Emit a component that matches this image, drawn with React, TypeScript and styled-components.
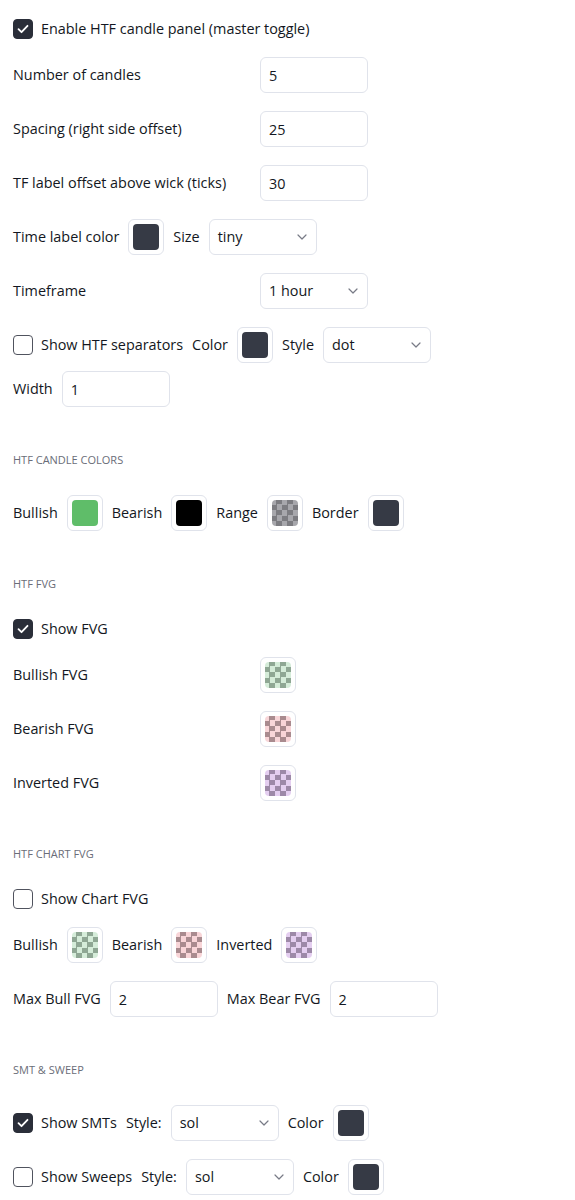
import React from "react";
import styled, { createGlobalStyle, css } from "styled-components";

const GlobalStyle = createGlobalStyle`
	body {
		margin: 0;
		background: #ffffff;
		font-family: "Open Sans", "Liberation Sans", sans-serif;
		color: #131722;
	}
`;

const Page = styled.div`
	display: flex;
	flex-direction: column;
	gap: 18px;
	padding: 19px 13px 4px 13px;
	font-size: 14.4px;
	line-height: 20px;
`;

const SectionTitle = styled.div`
	padding: 27px 0 9px 0;
	font-size: 11px;
	line-height: 16px;
	color: #6a6d78;
	text-transform: uppercase;
`;

// label column + control column, like the dialog grid
const GridRow = styled.div`
	display: grid;
	grid-template-columns: 247px auto;
	align-items: center;
	min-height: 36px;
`;

const InlineRow = styled.div<{ $wrap?: boolean }>`
	display: flex;
	align-items: center;
	gap: 9px;
	min-height: 36px;
	${(p) =>
		p.$wrap &&
		css`
			flex-wrap: wrap;
			row-gap: 8px;
		`}
`;

const Group = styled.div`
	display: flex;
	align-items: center;
	gap: 9px;
`;

const Label = styled.span`
	white-space: nowrap;
`;

const CheckWrap = styled.label`
	display: flex;
	align-items: center;
	gap: 8px;
	min-height: 20px;
	white-space: nowrap;
	cursor: pointer;
`;

const Box = styled.span<{ $checked?: boolean }>`
	display: inline-flex;
	align-items: center;
	justify-content: center;
	width: 20px;
	height: 20px;
	box-sizing: border-box;
	border-radius: 4px;
	border: 1px solid ${(p) => (p.$checked ? "#2a2e39" : "#50535e")};
	background: ${(p) => (p.$checked ? "#2a2e39" : "#ffffff")};
`;

const TextInput = styled.input`
	width: 108px;
	height: 36px;
	box-sizing: border-box;
	border: 1px solid #e0e3eb;
	border-radius: 6px;
	padding: 0 8px;
	font: inherit;
	color: #131722;
	outline: none;
`;

const SelectBox = styled.div`
	display: flex;
	align-items: center;
	justify-content: space-between;
	width: 108px;
	height: 36px;
	box-sizing: border-box;
	border: 1px solid #e0e3eb;
	border-radius: 6px;
	padding: 0 9px 0 8px;
	color: #131722;
`;

const SwatchFrame = styled.div`
	display: flex;
	align-items: center;
	justify-content: center;
	width: 36px;
	height: 36px;
	box-sizing: border-box;
	border: 1px solid #e0e3eb;
	border-radius: 6px;
	flex-shrink: 0;
`;

const SwatchFill = styled.div<{ $color: string; $alt?: string }>`
	width: 26px;
	height: 26px;
	border-radius: 4px;
	background: ${(p) => p.$color};
	${(p) =>
		p.$alt &&
		css`
			background-image: conic-gradient(
				${p.$color} 0 25%,
				${p.$alt} 0 50%,
				${p.$color} 0 75%,
				${p.$alt} 0
			);
			background-size: 11px 11px;
			background-position: -1px -1px;
		`}
`;

const Checkbox = ({ checked, label }: { checked?: boolean; label: string }) => (
	<CheckWrap>
		<Box $checked={checked}>
			{checked && (
				<svg width="12" height="10" viewBox="0 0 12 10" fill="none">
					<path d="M1.5 5.2l3 3 6-6.4" stroke="#fff" strokeWidth="1.8" strokeLinecap="round" strokeLinejoin="round" />
				</svg>
			)}
		</Box>
		{label}
	</CheckWrap>
);

const Select = ({ value }: { value: string }) => (
	<SelectBox>
		<span>{value}</span>
		<svg width="10" height="6" viewBox="0 0 10 6" fill="none">
			<path d="M1 1l4 4 4-4" stroke="#787b86" strokeWidth="1.2" strokeLinecap="round" strokeLinejoin="round" />
		</svg>
	</SelectBox>
);

const Swatch = ({ color, alt }: { color: string; alt?: string }) => (
	<SwatchFrame>
		<SwatchFill $color={color} $alt={alt} />
	</SwatchFrame>
);

const DARK = "#363a45";

export default function App() {
	return (
		<>
			<GlobalStyle />
			<Page>
				<Checkbox checked label="Enable HTF candle panel (master toggle)" />
				<GridRow>
					<Label>Number of candles</Label>
					<TextInput defaultValue="5" />
				</GridRow>
				<GridRow>
					<Label>Spacing (right side offset)</Label>
					<TextInput defaultValue="25" />
				</GridRow>
				<GridRow>
					<Label>TF label offset above wick (ticks)</Label>
					<TextInput defaultValue="30" />
				</GridRow>
				<InlineRow>
					<Label>Time label color</Label>
					<Swatch color={DARK} />
					<Label>Size</Label>
					<Select value="tiny" />
				</InlineRow>
				<GridRow>
					<Label>Timeframe</Label>
					<Select value="1 hour" />
				</GridRow>
				<InlineRow $wrap>
					<Checkbox label="Show HTF separators" />
					<Label>Color</Label>
					<Swatch color={DARK} />
					<Label>Style</Label>
					<Select value="dot" />
					<Group>
						<Label>Width</Label>
						<TextInput defaultValue="1" />
					</Group>
				</InlineRow>

				<SectionTitle>HTF candle colors</SectionTitle>
				<InlineRow>
					<Label>Bullish</Label>
					<Swatch color="#5fbd69" />
					<Label>Bearish</Label>
					<Swatch color="#000000" />
					<Label>Range</Label>
					<Swatch color="#7c7c81" alt="#a7a7ac" />
					<Label>Border</Label>
					<Swatch color={DARK} />
				</InlineRow>

				<SectionTitle>HTF FVG</SectionTitle>
				<Checkbox checked label="Show FVG" />
				<GridRow>
					<Label>Bullish FVG</Label>
					<Swatch color="#8fa794" alt="#d5ecd9" />
				</GridRow>
				<GridRow>
					<Label>Bearish FVG</Label>
					<Swatch color="#a98b8f" alt="#f8d5d8" />
				</GridRow>
				<GridRow>
					<Label>Inverted FVG</Label>
					<Swatch color="#9d89a8" alt="#e4cef0" />
				</GridRow>

				<SectionTitle>HTF chart FVG</SectionTitle>
				<Checkbox label="Show Chart FVG" />
				<InlineRow>
					<Label>Bullish</Label>
					<Swatch color="#8fa794" alt="#d5ecd9" />
					<Label>Bearish</Label>
					<Swatch color="#a98b8f" alt="#f8d5d8" />
					<Label>Inverted</Label>
					<Swatch color="#9d89a8" alt="#e4cef0" />
				</InlineRow>
				<InlineRow>
					<Label>Max Bull FVG</Label>
					<TextInput defaultValue="2" />
					<Label>Max Bear FVG</Label>
					<TextInput defaultValue="2" />
				</InlineRow>

				<SectionTitle>SMT &amp; Sweep</SectionTitle>
				<InlineRow>
					<Checkbox checked label="Show SMTs" />
					<Label>Style:</Label>
					<Select value="sol" />
					<Label>Color</Label>
					<Swatch color={DARK} />
				</InlineRow>
				<InlineRow>
					<Checkbox label="Show Sweeps" />
					<Label>Style:</Label>
					<Select value="sol" />
					<Label>Color</Label>
					<Swatch color={DARK} />
				</InlineRow>
			</Page>
		</>
	);
}
